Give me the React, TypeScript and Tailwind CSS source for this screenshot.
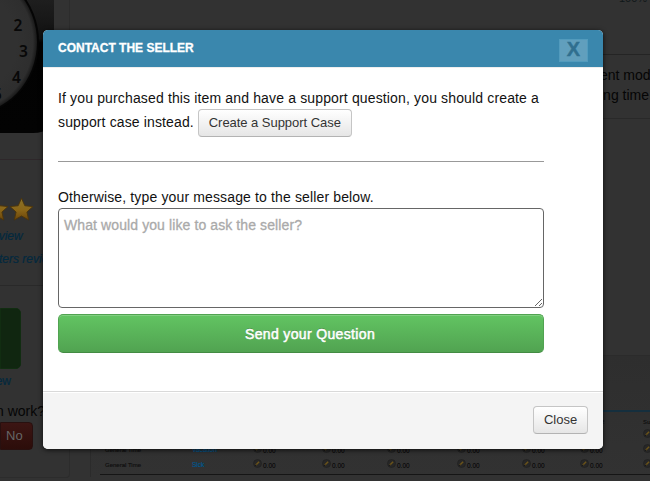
import React from "react";

function Star() {
  return (
    <svg viewBox="0 0 24 24" className="h-[25px] w-[25px] shrink-0">
      <defs>
        <linearGradient id="gold" x1="0" y1="0" x2="0" y2="1">
          <stop offset="0" stopColor="#8a7228" />
          <stop offset="0.55" stopColor="#8a6517" />
          <stop offset="1" stopColor="#6b450a" />
        </linearGradient>
      </defs>
      <path
        d="M12 1.2l3.2 7.2 7.8.8-5.8 5.2 1.7 7.7L12 18.2l-6.9 3.9 1.7-7.7L1 9.2l7.8-.8z"
        fill="url(#gold)"
        stroke="#4c340b"
        strokeWidth="0.9"
        strokeLinejoin="round"
      />
    </svg>
  );
}

function Clock() {
  return (
    <svg viewBox="0 0 54 134" className="block h-[134px] w-[54px] shrink-0">
      <defs>
        <linearGradient id="case" x1="0" y1="0" x2="0" y2="1">
          <stop offset="0" stopColor="#1e1e1e" />
          <stop offset="0.29" stopColor="#111" />
          <stop offset="0.32" stopColor="#020202" />
          <stop offset="1" stopColor="#030303" />
        </linearGradient>
        <radialGradient id="dial">
          <stop offset="0.7" stopColor="#313131" />
          <stop offset="0.94" stopColor="#2e2e2e" />
          <stop offset="1" stopColor="#191919" />
        </radialGradient>
      </defs>
      <path d="M0 0h54v112q0 21-21 21H0z" fill="url(#case)" />
      <ellipse cx="-31" cy="42" rx="70" ry="74" fill="#050505" />
      <ellipse cx="-31" cy="42" rx="68" ry="72" fill="url(#dial)" />
      <g fill="#080808" fontWeight="600" fontSize="15.5" className="font-['Noto_Sans',sans-serif]">
        <text x="13.5" y="31">2</text>
        <text x="19" y="57">3</text>
        <text x="12" y="83">4</text>
        <text x="-7" y="100">5</text>
      </g>
    </svg>
  );
}

function Pencil() {
  return (
    <svg viewBox="0 0 9 9" className="h-[9px] w-[9px] shrink-0">
      <circle cx="4.5" cy="4.5" r="4" fill="#272727" stroke="#202020" strokeWidth=".6" />
      <path d="M2.9 6l3.2-3.2" stroke="#6a531a" strokeWidth="1.6" />
      <path d="M2.4 6.6l.8-.8" stroke="#111" strokeWidth="1" />
    </svg>
  );
}

function Entry() {
  return (
    <span className="-ml-px flex items-start gap-px">
      <Pencil />
      <span className="pt-[3px] text-[6.5px] leading-[8px] text-black">0.00</span>
    </span>
  );
}

const columns = "grid grid-cols-[87px_62px_69px_65px_70px_65px_58px_63px_30px]";

function Row({ kind }: { kind: string }) {
  return (
    <div className={`${columns} h-[15px] pl-[5px]`}>
      <span className="pt-[2px] text-[6px] leading-[8px] text-[#0c0c0c] [-webkit-text-stroke:0.1px_#0c0c0c]">General Time</span>
      <span className="pt-[2px] text-[6.5px] leading-[8px] text-[#00568c] [-webkit-text-stroke:0.2px_#00568c]">{kind}</span>
      <Entry />
      <Entry />
      <Entry />
      <Entry />
      <Entry />
      <Entry />
      <Entry />
    </div>
  );
}

function Page() {
  return (
    <div className="flex h-full bg-[#323232]">
      <aside className="h-[478px] w-[70px] shrink-0 overflow-hidden rounded-br-sm border-r border-b border-[#2c2c2c]">
        <div className="h-[160px] border-b border-[#2e272a]">
          <Clock />
        </div>
        <div className="flex h-[64px] items-end pb-[2px]">
          <div className="-ml-[16px] flex">
            <Star />
            <Star />
          </div>
        </div>
        <p className="-ml-[8px] pt-[3px] text-[12px] leading-[18px] text-[#03293f] italic [-webkit-text-stroke:0.2px_#03293f]">eview</p>
        <p className="-ml-px pt-[5px] text-[12px] leading-[18px] whitespace-nowrap text-[#03293f] italic [-webkit-text-stroke:0.2px_#03293f]">ters reviews</p>
        <div className="mt-[17px] h-[23px] border-t border-[#292929]" />
        <div className="h-[61px] w-[21px] rounded-r-[5px] border border-[#112d11] bg-[#102610]" />
        <p className="-ml-[13px] pt-[3px] text-[12px] leading-[18px] text-[#03293f] [-webkit-text-stroke:0.2px_#03293f]">view</p>
        <p className="-ml-[4px] pt-[11px] text-[14px] leading-[20px] whitespace-nowrap text-[#050505]">n work?</p>
        <div className="mt-px flex h-[28px] w-[33px] items-center rounded-r-[4px] border border-[#28100f] bg-linear-to-b from-[#3c1513] to-[#2c0d0a] pl-[5px] text-[13px] text-[#666]">No</div>
      </aside>
      <main className="flex min-w-0 grow flex-col pl-[20px]">
        <div className="h-[55px] border-b border-[#242424] pl-[529px] text-[11px] leading-[7px] whitespace-nowrap text-[#101719]">
          <span className="relative -top-[5px]">100% of</span>
        </div>
        <div className="h-[64px] border-b border-[#292929] pt-[10px] pl-[510px] text-[14px] leading-[20px] whitespace-nowrap text-[#050505]">
          <p>ent modules</p>
          <p>ing time off</p>
        </div>
        <div className="h-[236px]" />
        <section className="h-[122px] border-t border-l border-[#2b2b2b] bg-linear-to-b from-[#2e2e2e] to-[#323232] pl-[9px]">
          <div className="h-[56px] border-b-2 border-[#152f3e]" />
          <div className={`${columns} h-[17px] pt-[6px] pl-[5px] text-[6px] leading-[8px] font-bold text-[#111]`}>
            <span>Type</span>
            <span>Name</span>
            <span>Jan</span>
            <span>Feb</span>
            <span>Mar</span>
            <span>Apr</span>
            <span>May</span>
            <span className="pl-[20px]">2</span>
            <span className="-ml-px">Sun</span>
          </div>
          <div className="border-b border-[#151515]">
            <Row kind="Personal" />
            <Row kind="Vacation" />
            <Row kind="Sick" />
          </div>
        </section>
      </main>
    </div>
  );
}

function Dialog() {
  return (
    <div className="absolute top-[30px] left-[43px] flex h-[419px] w-[560px] flex-col overflow-hidden rounded-[5px] bg-white shadow-[0_1px_5px_rgba(0,0,0,0.75)]">
      <header className="flex h-[37px] shrink-0 items-center justify-between bg-[#3a87ad] pr-[15px] pl-[15px]">
        <h1 className="-mt-px text-[12px] leading-[16px] font-bold text-white [-webkit-text-stroke:0.3px_white]">CONTACT THE SELLER</h1>
        <button className="mt-[4px] flex h-[23px] w-[29px] items-center justify-center border border-[#529bbd] bg-[#619fbd] pb-[3px] text-[20px] leading-none font-bold text-[#306f8f] [-webkit-text-stroke:0.4px_#306f8f]">X</button>
      </header>
      <div className="h-[324px] border-t border-[#eee] px-[15px] pt-[19px] text-[14px] text-[#111]">
        <p className="leading-[22px] tracking-[0.146px] whitespace-nowrap">If you purchased this item and have a support question, you should create a</p>
        <div className="flex h-[28px] items-center">
          <span className="-mt-px tracking-[0.13px]">support case instead.</span>
          <button className="ml-[4px] h-[28px] w-[154px] rounded-[4px] border border-[#c5c5c5] border-b-[#b3b3b3] bg-linear-to-b from-white to-[#e6e6e6] text-[13px] leading-[24px] tracking-[-0.04px] whitespace-nowrap text-[#333]">Create a Support Case</button>
        </div>
        <hr className="mt-[24px] w-[486px] border-[#999]" />
        <p className="mt-[25px] leading-[20px] tracking-[0.14px]">Otherwise, type your message to the seller below.</p>
        <textarea
          className="mt-px block h-[100px] w-[486px] resize rounded-[4px] border border-[#666] bg-white px-[5px] py-[6px] text-[14px] leading-[20px] tracking-[0.1px] placeholder:text-[#aaa] placeholder:[-webkit-text-stroke:0.3px_#aaa]"
          placeholder="What would you like to ask the seller?"
        />
        <button className="mt-[6px] flex h-[39px] w-[486px] items-center justify-center rounded-[5px] border border-[#51a351] border-b-[#438b43] bg-linear-to-b from-[#62c462] to-[#51a351] pt-px pl-[18px] text-[14px] tracking-[0.35px] text-white shadow-[inset_0_1px_0_rgba(255,255,255,0.2)] [-webkit-text-stroke:0.5px_white] [text-shadow:0_-1px_0_rgba(0,0,0,0.25)]">
          Send your Question
        </button>
      </div>
      <footer className="flex grow items-start justify-end border-t border-[#d9d9d9] bg-[#f4f4f4] pt-[14px] pr-[15px] shadow-[inset_0_1px_0_white]">
        <button className="h-[28px] w-[55px] rounded-[4px] border border-[#c5c5c5] border-b-[#b3b3b3] bg-linear-to-b from-white to-[#e6e6e6] text-[13px] leading-[24px] text-[#333]">Close</button>
      </footer>
    </div>
  );
}

export default function App() {
  return (
    <div className="relative h-[481px] w-[650px] overflow-hidden font-['Liberation_Sans',Arial,sans-serif]">
      <Page />
      <Dialog />
    </div>
  );
}
